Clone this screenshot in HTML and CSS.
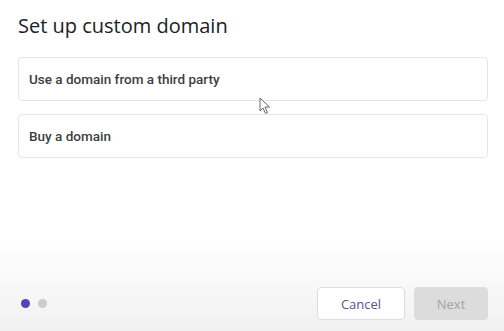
FILE: index.html
```html
<!DOCTYPE html>
<html lang="en">
  <head>
    <meta charset="UTF-8" />
    <meta name="viewport" content="width=device-width, initial-scale=1.0" />
    <title>Set up custom domain</title>
    <link rel="stylesheet" href="styles.css">
  </head>
  <body>
    <div class="dialog">
      <div class="content">
        <h2 class="title">Set up custom domain</h2>
        <div class="option">Use a domain from a third party</div>
        <div class="option">Buy a domain</div>
      </div>
      <div class="footer">
        <div class="steps">
          <span class="dot active"></span>
          <span class="dot"></span>
        </div>
        <div class="actions">
          <button class="btn cancel">Cancel</button>
          <button class="btn next" disabled>Next</button>
        </div>
      </div>
      <svg class="cursor" width="12" height="18" viewBox="0 0 12 18">
        <path d="M1 1 L1 14 L4 11 L6.5 16.5 L8.5 15.5 L6 10 L10.5 10 Z" fill="#fff" stroke="#555" stroke-width="0.9" stroke-linejoin="round" />
      </svg>
    </div>
  </body>
</html>
```

FILE: styles.css
```css
* {
  box-sizing: border-box;
  margin: 0;
  padding: 0;
}

body {
  font-family: Roboto, "Noto Sans", sans-serif;
  background-color: #ffffff;
  width: 504px;
  height: 331px;
  overflow: hidden;
}

.dialog {
  position: relative;
  height: 331px;
  display: flex;
  flex-direction: column;
  justify-content: space-between;
}

.content {
  padding: 13px 16px 0 18px;
}

.title {
  font-family: "Open Sans", sans-serif;
  font-weight: 400;
  font-size: 20px;
  color: #202124;
  line-height: 26px;
  margin-bottom: 18px;
}

.option {
  height: 44px;
  border: 1px solid #e6e6e6;
  border-radius: 4px;
  padding: 0 10px;
  display: flex;
  align-items: center;
  font-size: 13.5px;
  font-weight: 500;
  color: #3c4043;
  margin-bottom: 13px;
}

.footer {
  height: 92px;
  background: linear-gradient(to bottom, #ffffff 0%, #f1f1f1 100%);
  display: flex;
  align-items: flex-end;
  justify-content: space-between;
  padding: 0 16px 11px 21px;
}

.steps {
  display: flex;
  gap: 8px;
  align-items: center;
  height: 33px;
}

.dot {
  width: 9px;
  height: 9px;
  border-radius: 50%;
  background-color: #cccccc;
}

.dot.active {
  background-color: #5b3fb5;
}

.actions {
  display: flex;
  gap: 9px;
}

.btn {
  height: 33px;
  border-radius: 4px;
  font-family: "Open Sans", sans-serif;
  font-size: 13px;
  border: 1px solid #dcdcdc;
  background-color: #ffffff;
  cursor: pointer;
}

.cancel {
  width: 88px;
  color: #5e5391;
}

.next {
  width: 74px;
  background-color: #dcdcdc;
  border-color: #dcdcdc;
  color: #a3a3a3;
}

.cursor {
  position: absolute;
  left: 259px;
  top: 97px;
}
```
